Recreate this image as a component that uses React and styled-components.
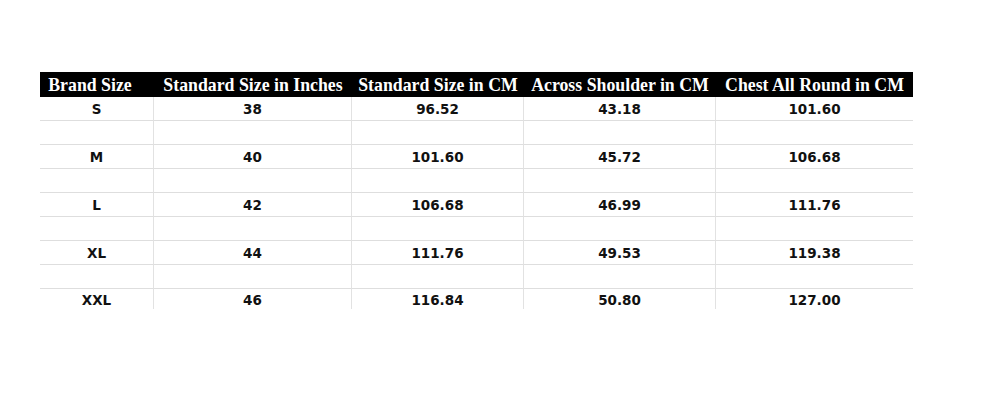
import React from 'react';
import styled, {createGlobalStyle} from 'styled-components';

const headers = [
  'Brand Size',
  'Standard Size in Inches',
  'Standard Size in CM',
  'Across Shoulder in CM',
  'Chest All Round in CM'
];

const rows = [
  ['S', '38', '96.52', '43.18', '101.60'],
  null,
  ['M', '40', '101.60', '45.72', '106.68'],
  null,
  ['L', '42', '106.68', '46.99', '111.76'],
  null,
  ['XL', '44', '111.76', '49.53', '119.38'],
  null,
  ['XXL', '46', '116.84', '50.80', '127.00']
];

export default function App() {
  return (
    <>
      <GlobalStyle />
      <Page>
        <Chart>
          {headers.map((h, i) => (
            <HeadCell key={h} first={i === 0}>{h}</HeadCell>
          ))}
          {rows.map((row, r) => {
            const cells = row || ['', '', '', '', ''];
            const last = r === rows.length - 1;
            return cells.map((c, i) => (
              <Cell key={r + '-' + i} lastCol={i === cells.length - 1} lastRow={last}>
                {c}
              </Cell>
            ));
          })}
        </Chart>
      </Page>
    </>
  );
}

const GlobalStyle = createGlobalStyle`
  html, body {
    margin: 0;
    padding: 0;
    background: #ffffff;
  }
`

const Page = styled.div`
  width: 1000px;
  height: 400px;
  padding: 72px 0 0 40px;
  box-sizing: border-box;
`

const Chart = styled.div`
  display: grid;
  grid-template-columns: 114px 198px 172px 192px 197px;
  grid-template-rows: 25px;
  grid-auto-rows: 24px;
  width: 873px;
`

const HeadCell = styled.div`
  background: #000000;
  color: #ffffff;
  font-family: "Liberation Serif", "Times New Roman", serif;
  font-weight: bold;
  font-size: 17.8px;
  display: flex;
  align-items: center;
  justify-content: center;
  white-space: nowrap;
  padding-top: 2px;
  padding-right: ${props => props.first ? '14px' : '0'};
  line-height: 1;
`

const Cell = styled.div`
  box-sizing: border-box;
  display: flex;
  align-items: center;
  justify-content: center;
  padding-top: 1px;
  font-family: "DejaVu Sans", Verdana, sans-serif;
  font-weight: bold;
  font-size: 13.5px;
  color: #111111;
  border-bottom: ${props => props.lastRow ? 'none' : '1px solid #dedede'};
  border-right: ${props => props.lastCol ? 'none' : '1px solid #e2e2e2'};
  height: ${props => props.lastRow ? '20px' : '24px'};
`
